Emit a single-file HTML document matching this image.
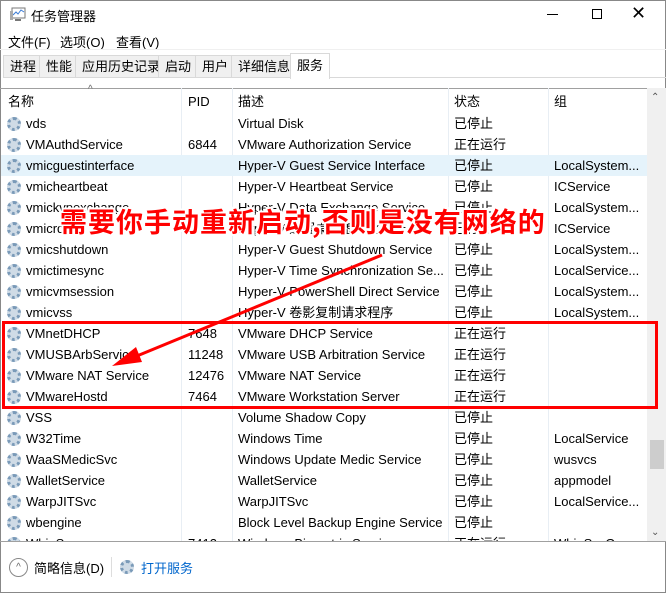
<!DOCTYPE html>
<html><head><meta charset="utf-8"><style>
*{margin:0;padding:0;box-sizing:border-box}
body{width:666px;height:593px;overflow:hidden;background:#fff;font-family:"Liberation Sans","Noto Sans CJK SC",sans-serif;font-size:13px;color:#000;position:relative}
.abs{position:absolute;white-space:nowrap}
.win{position:absolute;left:0;top:0;width:666px;height:593px;border:1px solid #888}
.tab{position:absolute;top:55px;height:23px;border:1px solid #d9d9d9;background:#f0f0f0;line-height:21px;padding:0 6px}
.row{position:absolute;left:1px;width:646px;height:21px;line-height:21px}
.row span{position:absolute;top:0;white-space:nowrap;overflow:hidden}
.c1{left:25px}.c2{left:187px}.c3{left:237px;width:206px}.c4{left:453px}.c5{left:553px}
.g{position:absolute;left:6px;top:4px;width:14px;height:14px;border-radius:50%;border:3px dotted #7a9ab8;background:#cfdbe6}
.vl{position:absolute;top:88px;height:453px;width:1px;background:#e8eef4}
.hd{position:absolute;top:90px;line-height:24px}
</style></head><body>
<div class="win"></div>
<svg class="abs" style="left:9px;top:7px" width="18" height="16"><rect x="3" y="1" width="13" height="10" fill="#fff" stroke="#777"/><polyline points="4,8 7,5 9,7 12,3 15,5" fill="none" stroke="#3a7bd5"/><rect x="1" y="4" width="3" height="9" fill="#aaa"/><rect x="6" y="12" width="6" height="2" fill="#777"/></svg>
<div class="abs" style="left:31px;top:6px">任务管理器</div>
<div class="abs" style="left:547px;top:14px;width:11px;height:1px;background:#000"></div>
<div class="abs" style="left:592px;top:9px;width:10px;height:10px;border:1px solid #000"></div>
<div class="abs" style="left:631px;top:3px;font-size:18px;font-weight:300">✕</div>
<div class="abs" style="left:8px;top:32px">文件(F)</div>
<div class="abs" style="left:60px;top:32px">选项(O)</div>
<div class="abs" style="left:116px;top:32px">查看(V)</div>
<div class="abs" style="left:0;top:49px;width:666px;height:1px;background:#f0f0f0"></div>
<div class="tab" style="left:3px">进程</div>
<div class="tab" style="left:39px">性能</div>
<div class="tab" style="left:75px">应用历史记录</div>
<div class="tab" style="left:158px">启动</div>
<div class="tab" style="left:195px">用户</div>
<div class="tab" style="left:231px">详细信息</div>
<div class="tab" style="left:290px;top:53px;height:26px;background:#fff;border-bottom:none;line-height:23px">服务</div>
<div class="abs" style="left:329px;top:77px;width:337px;height:1px;background:#d9d9d9"></div>
<div class="abs" style="left:0;top:88px;width:666px;height:1px;background:#a0a0a0"></div>
<div class="abs" style="left:88px;top:84px;font-size:10px;color:#666">^</div>
<div class="vl" style="left:181px"></div><div class="vl" style="left:232px"></div><div class="vl" style="left:448px"></div><div class="vl" style="left:548px"></div>
<div class="hd" style="left:8px">名称</div>
<div class="hd" style="left:188px">PID</div>
<div class="hd" style="left:238px">描述</div>
<div class="hd" style="left:454px">状态</div>
<div class="hd" style="left:554px">组</div>
<div class="abs" style="left:647px;top:88px;width:19px;height:453px;background:#f0f0f0"></div>
<div class="abs" style="left:650px;top:440px;width:14px;height:29px;background:#cdcdcd"></div>
<div class="abs" style="left:651px;top:92px;font-size:10px;color:#555">⌃</div>
<div class="abs" style="left:651px;top:527px;font-size:10px;color:#555">⌄</div>
<div style="position:absolute;left:0;top:113px;width:647px;height:428px;overflow:hidden">
<div class="row" style="top:0"><i class="g"></i><span class="c1">vds</span><span class="c3">Virtual Disk</span><span class="c4">已停止</span></div>
<div class="row" style="top:21px"><i class="g"></i><span class="c1">VMAuthdService</span><span class="c2">6844</span><span class="c3">VMware Authorization Service</span><span class="c4">正在运行</span></div>
<div class="row" style="top:42px;background:#e5f3fb"><i class="g"></i><span class="c1">vmicguestinterface</span><span class="c3">Hyper-V Guest Service Interface</span><span class="c4">已停止</span><span class="c5">LocalSystem...</span></div>
<div class="row" style="top:63px"><i class="g"></i><span class="c1">vmicheartbeat</span><span class="c3">Hyper-V Heartbeat Service</span><span class="c4">已停止</span><span class="c5">ICService</span></div>
<div class="row" style="top:84px"><i class="g"></i><span class="c1">vmickvpexchange</span><span class="c3">Hyper-V Data Exchange Service</span><span class="c4">已停止</span><span class="c5">LocalSystem...</span></div>
<div class="row" style="top:105px"><i class="g"></i><span class="c1">vmicrdv</span><span class="c3">Hyper-V 远程桌面虚拟化服务</span><span class="c4">已停止</span><span class="c5">ICService</span></div>
<div class="row" style="top:126px"><i class="g"></i><span class="c1">vmicshutdown</span><span class="c3">Hyper-V Guest Shutdown Service</span><span class="c4">已停止</span><span class="c5">LocalSystem...</span></div>
<div class="row" style="top:147px"><i class="g"></i><span class="c1">vmictimesync</span><span class="c3">Hyper-V Time Synchronization Se...</span><span class="c4">已停止</span><span class="c5">LocalService...</span></div>
<div class="row" style="top:168px"><i class="g"></i><span class="c1">vmicvmsession</span><span class="c3">Hyper-V PowerShell Direct Service</span><span class="c4">已停止</span><span class="c5">LocalSystem...</span></div>
<div class="row" style="top:189px"><i class="g"></i><span class="c1">vmicvss</span><span class="c3">Hyper-V 卷影复制请求程序</span><span class="c4">已停止</span><span class="c5">LocalSystem...</span></div>
<div class="row" style="top:210px"><i class="g"></i><span class="c1">VMnetDHCP</span><span class="c2">7648</span><span class="c3">VMware DHCP Service</span><span class="c4">正在运行</span></div>
<div class="row" style="top:231px"><i class="g"></i><span class="c1">VMUSBArbService</span><span class="c2">11248</span><span class="c3">VMware USB Arbitration Service</span><span class="c4">正在运行</span></div>
<div class="row" style="top:252px"><i class="g"></i><span class="c1">VMware NAT Service</span><span class="c2">12476</span><span class="c3">VMware NAT Service</span><span class="c4">正在运行</span></div>
<div class="row" style="top:273px"><i class="g"></i><span class="c1">VMwareHostd</span><span class="c2">7464</span><span class="c3">VMware Workstation Server</span><span class="c4">正在运行</span></div>
<div class="row" style="top:294px"><i class="g"></i><span class="c1">VSS</span><span class="c3">Volume Shadow Copy</span><span class="c4">已停止</span></div>
<div class="row" style="top:315px"><i class="g"></i><span class="c1">W32Time</span><span class="c3">Windows Time</span><span class="c4">已停止</span><span class="c5">LocalService</span></div>
<div class="row" style="top:336px"><i class="g"></i><span class="c1">WaaSMedicSvc</span><span class="c3">Windows Update Medic Service</span><span class="c4">已停止</span><span class="c5">wusvcs</span></div>
<div class="row" style="top:357px"><i class="g"></i><span class="c1">WalletService</span><span class="c3">WalletService</span><span class="c4">已停止</span><span class="c5">appmodel</span></div>
<div class="row" style="top:378px"><i class="g"></i><span class="c1">WarpJITSvc</span><span class="c3">WarpJITSvc</span><span class="c4">已停止</span><span class="c5">LocalService...</span></div>
<div class="row" style="top:399px"><i class="g"></i><span class="c1">wbengine</span><span class="c3">Block Level Backup Engine Service</span><span class="c4">已停止</span></div>
<div class="row" style="top:420px"><i class="g"></i><span class="c1">WbioSrvc</span><span class="c2">7412</span><span class="c3">Windows Biometric Service</span><span class="c4">正在运行</span><span class="c5">WbioSvcGro...</span></div>
</div>
<div class="abs" style="left:0;top:541px;width:666px;height:1px;background:#a0a0a0"></div>
<div class="abs" style="left:9px;top:558px;width:19px;height:19px;border:1px solid #888;border-radius:50%;font-size:10px;text-align:center;line-height:18px;color:#666">^</div>
<div class="abs" style="left:34px;top:558px">简略信息(D)</div>
<div class="abs" style="left:111px;top:557px;width:1px;height:20px;background:#ddd"></div>
<i class="g" style="position:absolute;left:120px;top:560px"></i>
<div class="abs" style="left:141px;top:558px;color:#0066cc">打开服务</div>
<div class="abs" style="left:2px;top:321px;width:656px;height:88px;border:3px solid #f00"></div>
<svg class="abs" style="left:0;top:0" width="666" height="593"><line x1="382" y1="255" x2="132" y2="358" stroke="#f00" stroke-width="3"/><polygon points="112,366 136,347 142,362" fill="#f00"/></svg>
<div class="abs" style="left:60px;top:202px;font-size:27px;font-weight:bold;letter-spacing:1px;color:#f00;font-family:'Noto Sans CJK SC',sans-serif;line-height:38px;text-shadow:-2px -2px 0 #fff,2px -2px 0 #fff,-2px 2px 0 #fff,2px 2px 0 #fff,0 2px 0 #fff,0 -2px 0 #fff,2px 0 0 #fff,-2px 0 0 #fff">需要你手动重新启动,否则是没有网络的</div>
</body></html>
